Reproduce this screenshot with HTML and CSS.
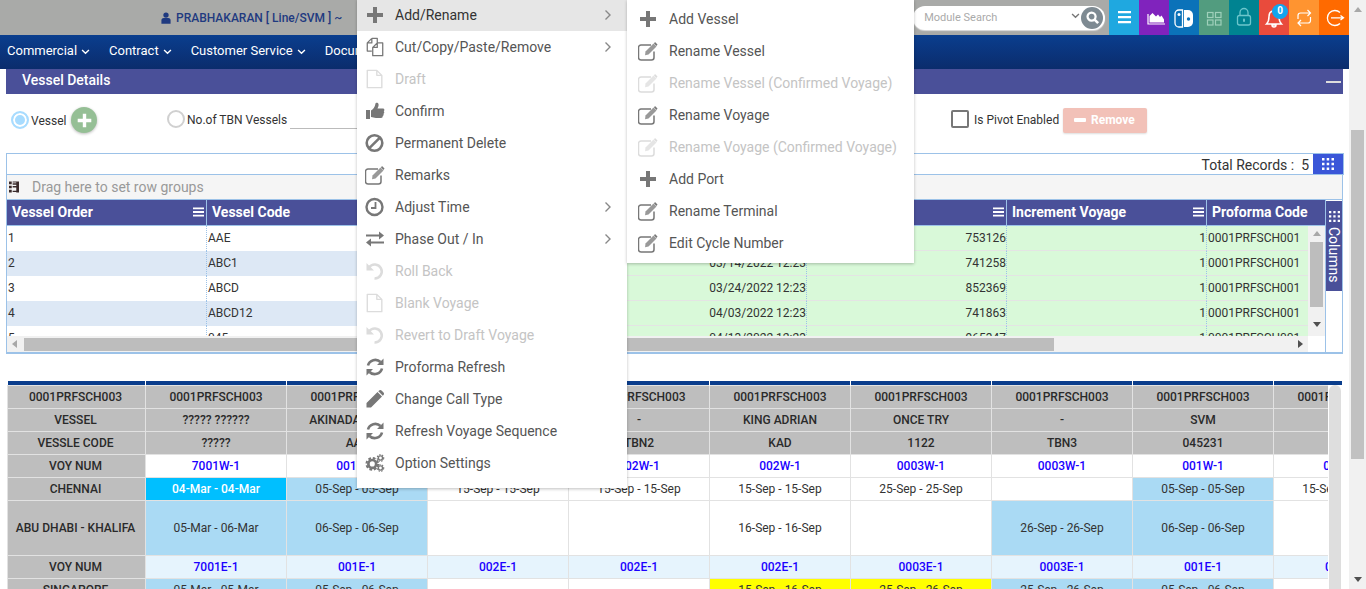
FILE: index.html
```html
<!DOCTYPE html>
<html lang="en">
<head>
<meta charset="utf-8">
<title>Vessel Details</title>
<link rel="stylesheet" href="styles.css">
</head>
<body>
<svg class="sprite" width="0" height="0" aria-hidden="true">
  <defs>
    <symbol id="i-plus" viewBox="0 0 20 20"><path d="M8 2h4v6h6v4h-6v6H8v-6H2V8h6z" fill="currentColor"/></symbol>
    <symbol id="i-copy" viewBox="0 0 20 22"><path d="M6.500 1.500h6v5M6.500 1.500l-5 5v9h5M6.500 1.500v5h-5M12.500 6.500l-5 5v9h11v-14zM12.500 6.500v5h-5" fill="none" stroke="currentColor" stroke-width="1.400" stroke-linejoin="round"/></symbol>
    <symbol id="i-file" viewBox="0 0 20 22"><path d="M1.500 1.500h10.500l5.500 5.500v13.500h-16zM12 1.500V7h5.500" fill="none" stroke="currentColor" stroke-width="1.500" stroke-linejoin="round"/></symbol>
    <symbol id="i-thumb" viewBox="0 0 20 20"><path d="M1 9h4v9H1zM6 9.500c2-1 4-3.500 4.500-7 0-1 2.500-1.500 3 .5.400 1.500-.5 3.500-1 4.500H18c1.500 0 1.800 2 .8 2.700.8.800.6 2-.3 2.500.4 1-.1 2-.8 2.300.2 1.200-.5 2-1.700 2H11c-2 0-3-1-5-1z" fill="currentColor"/></symbol>
    <symbol id="i-ban" viewBox="0 0 20 20"><circle cx="9.500" cy="10" r="7.800" fill="none" stroke="currentColor" stroke-width="2.600"/><path d="M4.300 15.200 14.700 4.800" stroke="currentColor" stroke-width="2.600"/></symbol>
    <symbol id="i-edit" viewBox="0 0 20 20"><path d="M16 10.500v6a2.500 2.500 0 0 1-2.500 2.500H3a2.500 2.500 0 0 1-2.500-2.500V6.500A2.500 2.500 0 0 1 3 4h10" fill="none" stroke="currentColor" stroke-width="1.500"/><path d="M7.500 10.500 15.500 2.500l3 3-8 8-3.500.7z" fill="currentColor" fill-opacity=".75"/><path d="M17 1l2.500 2.500L18.500 5 16 2.500z" fill="currentColor"/></symbol>
    <symbol id="i-clock" viewBox="0 0 20 20"><circle cx="9.500" cy="10" r="8" fill="none" stroke="currentColor" stroke-width="2.400"/><path d="M10.500 5v6H6" fill="none" stroke="currentColor" stroke-width="1.800"/></symbol>
    <symbol id="i-swap" viewBox="0 0 20 20"><path d="M1 5.500h13V2.500l5 4-5 4V7.500H1zM19 12.500H6V9.500l-5 4 5 4v-3h13z" fill="currentColor"/></symbol>
    <symbol id="i-undo" viewBox="0 0 20 20"><path d="M4 6.500A7 7 0 1 1 9.500 17.500" fill="none" stroke="currentColor" stroke-width="2.500"/><path d="M1.500 2v7.500H9z" fill="currentColor"/></symbol>
    <symbol id="i-sync" viewBox="0 0 20 20"><path d="M3 8.500A7.500 7.500 0 0 1 15.500 5M17 11.500A7.500 7.500 0 0 1 4.500 15" fill="none" stroke="currentColor" stroke-width="2.600"/><path d="M18.500 1.500V8H12zM1.500 18.500V12H8z" fill="currentColor"/></symbol>
    <symbol id="i-pencil" viewBox="0 0 20 20"><path d="M1.500 14 12.500 3l4.500 4.500L6 18.500H1.500zM13.800 1.700c1-1 2-1 3 0l1.500 1.500c1 1 1 2 0 3l-.5.500-4.500-4.500z" fill="currentColor"/></symbol>
    <symbol id="i-cogs" viewBox="0 0 22 20"><circle cx="8" cy="11" r="4.300" fill="none" stroke="currentColor" stroke-width="3"/><circle cx="8" cy="11" r="6.400" fill="none" stroke="currentColor" stroke-width="2.200" stroke-dasharray="3 2"/><circle cx="17" cy="4.500" r="2.300" fill="none" stroke="currentColor" stroke-width="1.500"/><circle cx="17" cy="4.500" r="3.600" fill="none" stroke="currentColor" stroke-width="1.200" stroke-dasharray="1.800 1.200"/><circle cx="17" cy="15.500" r="2.300" fill="none" stroke="currentColor" stroke-width="1.500"/><circle cx="17" cy="15.500" r="3.600" fill="none" stroke="currentColor" stroke-width="1.200" stroke-dasharray="1.800 1.200"/></symbol>
    <symbol id="i-chev" viewBox="0 0 8 12"><path d="M1.500 1.500 6 6l-4.500 4.500" fill="none" stroke="currentColor" stroke-width="1.400"/></symbol>
    <symbol id="i-down" viewBox="0 0 10 7"><path d="M1 1.200 5 5l4-3.800" fill="none" stroke="currentColor" stroke-width="1.600"/></symbol>
    <symbol id="i-bars" viewBox="0 0 12 10"><path d="M0 0h12v2H0zM0 4h12v2H0zM0 8h12v2H0z" fill="currentColor"/></symbol>
    <symbol id="i-dots" viewBox="0 0 12 12"><path d="M0 0h2.500v2.500H0zM4.700 0h2.500v2.500H4.700zM9.500 0H12v2.500H9.500zM0 4.700h2.500v2.500H0zM4.700 4.700h2.500v2.500H4.700zM9.500 4.700H12v2.500H9.500zM0 9.500h2.500V12H0zM4.700 9.500h2.500V12H4.700zM9.500 9.500H12V12H9.500z" fill="currentColor"/></symbol>
  </defs>
</svg>

<div class="page">
  <header class="topbar">
    <div class="user">
      <svg class="user-ico" viewBox="0 0 12 14"><circle cx="6" cy="3.500" r="3.200" fill="currentColor"/><path d="M.5 14V9.500C.5 8 2 7 3.200 7h5.600C10 7 11.500 8 11.500 9.500V14z" fill="currentColor"/></svg>
      <span>PRABHAKARAN [ Line/SVM ] ~</span>
    </div>
    <div class="search">
      <span class="search-ph">Module Search</span>
      <svg class="search-chev"><use href="#i-down"/></svg>
      <span class="search-btn"><svg viewBox="0 0 16 16"><circle cx="7" cy="7" r="4.300" fill="none" stroke="#fff" stroke-width="2.400"/><path d="M10.200 10.200 14 14" stroke="#fff" stroke-width="2.800"/></svg></span>
    </div>
    <div class="tiles">
      <span class="tile t1"><svg viewBox="0 0 30 35"><path d="M9 11h13v2.200H9zM9 16h13v2.200H9zM9 21h13v2.200H9z" fill="#fff"/></svg></span>
      <span class="tile t2"><svg viewBox="0 0 30 35"><path d="M9 14v10h17" fill="none" stroke="#fff" stroke-width="1.200"/><path d="M10.500 22.500V16l3-3 3.500 3.500 2-2 2 2.500 1.500-1.500 2.500 4v3z" fill="#fff"/></svg></span>
      <span class="tile t3"><svg viewBox="0 0 30 35"><path d="M13.500 10H10a4 4 0 0 0-4 4v9a4 4 0 0 0 4 4h3.500z" fill="none" stroke="#fff" stroke-width="1.300"/><path d="M15 10h4a5 5 0 0 1 5 5v7a5 5 0 0 1-5 5h-4z" fill="#fff"/><circle cx="10" cy="14.500" r="1.500" fill="#fff"/><circle cx="19.500" cy="19" r="1.700" fill="#0b72b9"/></svg></span>
      <span class="tile t4"><svg viewBox="0 0 30 35"><g fill="none" stroke="#9fd0ba" stroke-width="1.200"><rect x="8.500" y="12.500" width="5.500" height="5"/><rect x="16.500" y="12.500" width="5.500" height="5"/><rect x="8.500" y="20" width="5.500" height="5"/><rect x="16.500" y="20" width="5.500" height="5"/></g></svg></span>
      <span class="tile t5"><svg viewBox="0 0 30 35"><g fill="none" stroke="#6cc6cc" stroke-width="1.300"><rect x="8.500" y="15.500" width="13" height="9.500" rx="2"/><path d="M11 15.500V12.500a4 4 0 0 1 8 0v3"/></g><rect x="14" y="18.500" width="2" height="3.500" rx="1" fill="#6cc6cc"/></svg></span>
      <span class="tile t6"><svg viewBox="0 0 30 35"><path d="M15 11c-3.500 0-5 2.500-5 5.500 0 4-1 6-2.500 7.500h15C21 22.500 20 20.500 20 16.500c0-3-1.500-5.500-5-5.500zM13 25h4a2 2 0 0 1-4 0z" fill="none" stroke="#fff" stroke-width="1.500"/></svg><b class="badge">0</b></span>
      <span class="tile t7"><svg viewBox="0 0 30 35"><path d="M9 19v-3.500a2.500 2.500 0 0 1 2.500-2.500H21M18.500 10l3 3-3 3M21.500 17v3.500a2.500 2.500 0 0 1-2.500 2.500H9M12 20l-3 3 3 3" fill="none" stroke="#fff" stroke-width="1.200"/></svg></span>
      <span class="tile t8"><svg viewBox="0 0 30 35"><path d="M21 12.500a7.500 7.500 0 1 0 0 11" fill="none" stroke="#fff" stroke-width="1.300"/><path d="M12 17.800h12M21.500 15.500l3 2.300-3 2.300" fill="none" stroke="#fff" stroke-width="1.300"/></svg></span>
    </div>
  </header>

  <nav class="mainnav">
    <a>Commercial<svg><use href="#i-down"/></svg></a>
    <a>Contract<svg><use href="#i-down"/></svg></a>
    <a>Customer Service<svg><use href="#i-down"/></svg></a>
    <a>Documentation<svg><use href="#i-down"/></svg></a>
  </nav>

  <main class="content">
    <section class="panel-head">
      <h1>Vessel Details</h1>
      <span class="minus"></span>
    </section>

    <section class="filters">
      <span class="radio on"></span>
      <label class="f-vessel">Vessel</label>
      <span class="round-add"><svg><use href="#i-plus"/></svg></span>
      <span class="radio second"></span>
      <label class="f-tbn">No.of TBN Vessels</label>
      <span class="line-input"></span>
      <span class="check"></span>
      <label class="f-pivot">Is Pivot Enabled</label>
      <span class="remove-btn"><i></i>Remove</span>
    </section>

    <section class="grid-top">
      <span class="total">Total Records :&nbsp; 5</span>
      <span class="grid-btn"><svg><use href="#i-dots"/></svg></span>
    </section>

    <section class="grid">
      <div class="group-bar">
        <svg class="group-ico" viewBox="0 0 11 12"><path d="M0 0h3v3H0zM0 4.500h3v3H0zM0 9h3v3H0zM4 2h7v1.500H4zM4 0h7v1H4zM4 5h7v1.500H4zM4 10h7v1.500H4zM8 0h3v12H8z" fill="#3a2a2a"/></svg>
        <span>Drag here to set row groups</span>
      </div>
      <div class="grid-main">
        <div class="grid-left">
          <div class="g-head">
            <div class="hc">Vessel Order<svg><use href="#i-bars"/></svg></div>
            <div class="hc">Vessel Code<svg><use href="#i-bars"/></svg></div>
            <div class="hc">Vessel Name<svg><use href="#i-bars"/></svg></div>
            <div class="hc">Start Date<svg><use href="#i-bars"/></svg></div>
            <div class="hc">Start Voyage<svg><use href="#i-bars"/></svg></div>
            <div class="hc">Increment Voyage<svg><use href="#i-bars"/></svg></div>
            <div class="hc last">Proforma Code</div>
          </div>
          <div class="g-mid">
            <div class="g-body">
              <div class="g-row">
                <div class="c">1</div><div class="c">AAE</div><div class="c g"></div><div class="c g r">03/04/2022 12:23</div><div class="c g r">753126</div><div class="c g r">1</div><div class="c g last">0001PRFSCH001</div>
              </div>
              <div class="g-row alt">
                <div class="c">2</div><div class="c">ABC1</div><div class="c g"></div><div class="c g r">03/14/2022 12:23</div><div class="c g r">741258</div><div class="c g r">1</div><div class="c g last">0001PRFSCH001</div>
              </div>
              <div class="g-row">
                <div class="c">3</div><div class="c">ABCD</div><div class="c g"></div><div class="c g r">03/24/2022 12:23</div><div class="c g r">852369</div><div class="c g r">1</div><div class="c g last">0001PRFSCH001</div>
              </div>
              <div class="g-row alt">
                <div class="c">4</div><div class="c">ABCD12</div><div class="c g"></div><div class="c g r">04/03/2022 12:23</div><div class="c g r">741863</div><div class="c g r">1</div><div class="c g last">0001PRFSCH001</div>
              </div>
              <div class="g-row">
                <div class="c">5</div><div class="c">045</div><div class="c g"></div><div class="c g r">04/13/2022 12:23</div><div class="c g r">965347</div><div class="c g r">1</div><div class="c g last">0001PRFSCH001</div>
              </div>
            </div>
            <div class="v-scroll"><i class="arr up"></i><b></b><i class="arr down"></i></div>
          </div>
          <div class="h-scroll">
            <div class="h-track"><i class="arr left"></i><b></b><i class="arr right"></i></div>
          </div>
        </div>
        <aside class="side">
          <div class="side-tab"><svg><use href="#i-dots"/></svg><span>Columns</span></div>
        </aside>
      </div>
    </section>

    <section class="sched">
      <table>
        <colgroup><col class="c0"><col class="cn"><col class="cn"><col class="cn"><col class="cn"><col class="cn"><col class="cn"><col class="cn"><col class="cn"><col class="cn"></colgroup>
        <tr class="stripe"><td></td><td></td><td></td><td></td><td></td><td></td><td></td><td></td><td></td><td></td></tr>
        <tr class="hd"><td>0001PRFSCH003</td><td>0001PRFSCH003</td><td>0001PRFSCH003</td><td>0001PRFSCH003</td><td>0001PRFSCH003</td><td>0001PRFSCH003</td><td>0001PRFSCH003</td><td>0001PRFSCH003</td><td>0001PRFSCH003</td><td>0001PRFSCH003</td></tr>
        <tr class="hd"><td>VESSEL</td><td>????? ??????</td><td>AKINADA BRIDGE</td><td>-</td><td>-</td><td>KING ADRIAN</td><td>ONCE TRY</td><td>-</td><td>SVM</td><td>TEST</td></tr>
        <tr class="hd"><td>VESSLE CODE</td><td>?????</td><td>AAE</td><td>TBN1</td><td>TBN2</td><td>KAD</td><td>1122</td><td>TBN3</td><td>045231</td><td>TES</td></tr>
        <tr class="voy"><td class="lab">VOY NUM</td><td>7001W-1</td><td>001W-1</td><td>002W-1</td><td>002W-1</td><td>002W-1</td><td>0003W-1</td><td>0003W-1</td><td>001W-1</td><td>001W-1</td></tr>
        <tr><td class="lab">CHENNAI</td><td class="now">04-Mar - 04-Mar</td><td class="blu">05-Sep - 05-Sep</td><td>15-Sep - 15-Sep</td><td>15-Sep - 15-Sep</td><td>15-Sep - 15-Sep</td><td>25-Sep - 25-Sep</td><td></td><td class="blu">05-Sep - 05-Sep</td><td>15-Sep - 15-Sep</td></tr>
        <tr class="tall"><td class="lab">ABU DHABI - KHALIFA</td><td class="blu">05-Mar - 06-Mar</td><td class="blu">06-Sep - 06-Sep</td><td></td><td></td><td>16-Sep - 16-Sep</td><td></td><td class="blu">26-Sep - 26-Sep</td><td class="blu">06-Sep - 06-Sep</td><td></td></tr>
        <tr class="voy east"><td class="lab">VOY NUM</td><td>7001E-1</td><td>001E-1</td><td>002E-1</td><td>002E-1</td><td>002E-1</td><td>0003E-1</td><td>0003E-1</td><td>001E-1</td><td>001E-1</td></tr>
        <tr><td class="lab">SINGAPORE</td><td class="blu">05-Mar - 05-Mar</td><td class="blu">05-Sep - 06-Sep</td><td></td><td></td><td class="yel">15-Sep - 16-Sep</td><td class="yel">25-Sep - 26-Sep</td><td class="blu">25-Sep - 26-Sep</td><td class="blu">05-Sep - 06-Sep</td><td></td></tr>
      </table>
      <div class="sched-scroll"><b></b></div>
    </section>
  </main>
</div>

<div class="page-scroll"><i class="arr up"></i><b></b><i class="arr down"></i></div>

<div class="menu">
  <div class="mi active"><svg><use href="#i-plus"/></svg><span>Add/Rename</span><svg class="chev"><use href="#i-chev"/></svg></div>
  <div class="mi"><svg><use href="#i-copy"/></svg><span>Cut/Copy/Paste/Remove</span><svg class="chev"><use href="#i-chev"/></svg></div>
  <div class="mi off"><svg><use href="#i-file"/></svg><span>Draft</span></div>
  <div class="mi"><svg><use href="#i-thumb"/></svg><span>Confirm</span></div>
  <div class="mi"><svg><use href="#i-ban"/></svg><span>Permanent Delete</span></div>
  <div class="mi"><svg><use href="#i-edit"/></svg><span>Remarks</span></div>
  <div class="mi"><svg><use href="#i-clock"/></svg><span>Adjust Time</span><svg class="chev"><use href="#i-chev"/></svg></div>
  <div class="mi"><svg><use href="#i-swap"/></svg><span>Phase Out / In</span><svg class="chev"><use href="#i-chev"/></svg></div>
  <div class="mi off"><svg><use href="#i-undo"/></svg><span>Roll Back</span></div>
  <div class="mi off"><svg><use href="#i-file"/></svg><span>Blank Voyage</span></div>
  <div class="mi off"><svg><use href="#i-undo"/></svg><span>Revert to Draft Voyage</span></div>
  <div class="mi"><svg><use href="#i-sync"/></svg><span>Proforma Refresh</span></div>
  <div class="mi"><svg><use href="#i-pencil"/></svg><span>Change Call Type</span></div>
  <div class="mi"><svg><use href="#i-sync"/></svg><span>Refresh Voyage Sequence</span></div>
  <div class="mi"><svg><use href="#i-cogs"/></svg><span>Option Settings</span></div>

  <div class="submenu">
    <div class="mi"><svg><use href="#i-plus"/></svg><span>Add Vessel</span></div>
    <div class="mi"><svg><use href="#i-edit"/></svg><span>Rename Vessel</span></div>
    <div class="mi off"><svg><use href="#i-edit"/></svg><span>Rename Vessel (Confirmed Voyage)</span></div>
    <div class="mi"><svg><use href="#i-edit"/></svg><span>Rename Voyage</span></div>
    <div class="mi off"><svg><use href="#i-edit"/></svg><span>Rename Voyage (Confirmed Voyage)</span></div>
    <div class="mi"><svg><use href="#i-plus"/></svg><span>Add Port</span></div>
    <div class="mi"><svg><use href="#i-edit"/></svg><span>Rename Terminal</span></div>
    <div class="mi"><svg><use href="#i-edit"/></svg><span>Edit Cycle Number</span></div>
  </div>
</div>
</body>
</html>
```

FILE: styles.css
```css
* { box-sizing: border-box; }
html, body { margin: 0; padding: 0; height: 589px; overflow: hidden; }
body {
  display: flex;
  width: 1366px;
  background: #fff;
  font-family: Roboto, "Liberation Sans", sans-serif;
  font-size: 12px;
  color: #333;
}
.sprite { position: absolute; }
.page { width: 1349px; flex: none; }

/* top bar */
.topbar { height: 35px; background: #a9aaa8; display: flex; align-items: center; }
.user { width: 914px; padding-left: 161px; display: flex; align-items: center; gap: 5px; color: #1f3a80; font-weight: 500; font-size: 12px; }
.user-ico { width: 10px; height: 12px; }
.search { width: 192px; height: 24px; background: #fff; border-radius: 12px; display: flex; align-items: center; padding-left: 11px; box-shadow: 0 1px 1px #ddd; }
.search-ph { width: 147px; color: #aaa; font-size: 11px; }
.search-chev { width: 9px; height: 6px; color: #777; margin-bottom: 4px; }
.search-btn { width: 22px; height: 22px; margin-left: 1px; border-radius: 50%; background: #7e8a92; display: flex; align-items: center; justify-content: center; }
.search-btn svg { width: 15px; height: 15px; }
.tiles { margin-left: 4px; display: flex; }
.tile { width: 30px; height: 35px; display: block; position: relative; }
.tile svg { width: 30px; height: 35px; display: block; }
.t1 { background: #1fa8e0; }
.t2 { background: #8023bd; }
.t3 { background: #0b72b9; }
.t4 { background: #529c7f; }
.t5 { background: #008391; }
.t6 { background: #e94b3c; }
.t7 { background: #ff9430; }
.t8 { background: #ff6a00; }
.badge { position: absolute; left: 13px; top: 4px; width: 16px; height: 15px; border-radius: 50%; background: #12a5ee; color: #fff; font-size: 10px; font-weight: 700; text-align: center; line-height: 14px; }

/* nav */
.mainnav { height: 34px; background: linear-gradient(#0a3e8e, #0b2c6c); display: flex; padding: 0 0 3px 7px; gap: 15px; align-items: center; }
.mainnav a { color: #fff; font-size: 13px; display: flex; align-items: center; gap: 4px; }
.mainnav svg { width: 9px; height: 6px; margin-top: 2px; color: #fff; margin-right: 4px; }

/* content */
.content { padding: 0 6px; }
.panel-head { height: 25px; background: #4a5099; display: flex; align-items: center; justify-content: space-between; padding: 0 2px 0 16px; }
.panel-head h1 { margin: 0 0 3px; font-size: 14px; font-weight: 500; color: #fff; }
.minus { width: 15px; height: 2px; background: #ddd; }

.filters { height: 59px; display: flex; align-items: center; padding: 0 196px 7px 5px; }
.filters label { padding-top: 2px; }
.radio { width: 18px; height: 18px; border-radius: 50%; border: 2px solid #d0d0d0; background: #fff; flex: none; }
.radio.on { border-color: #a8dcff; box-shadow: inset 0 0 0 2px #fff; background: #a8dcff; }
.radio.second { margin-left: 70px; margin-bottom: 2px; }
.f-vessel { margin-left: 2px; width: 40px; }
.round-add { width: 26px; height: 26px; border-radius: 50%; background: #95bf95; box-shadow: 0 1px 3px #bbb; display: flex; align-items: center; justify-content: center; color: #fff; }
.round-add svg { width: 17px; height: 17px; }
.f-tbn { margin-left: 2px; margin-bottom: 2px; width: 103px; }
.line-input { width: 90px; height: 18px; border-bottom: 1px solid #bbb; }
.check { margin-left: auto; width: 18px; height: 18px; border: 2px solid #777; border-radius: 2px; margin-bottom: 2px; }
.f-pivot { margin-left: 5px; margin-bottom: 2px; width: 89px; }
.remove-btn { width: 84px; height: 25px; border-radius: 2px; background: #f2c1b8; color: #fff; font-weight: 700; display: flex; align-items: center; padding-left: 11px; gap: 5px; box-shadow: 0 1px 2px #ddd; }
.remove-btn i { width: 12px; height: 4px; border-radius: 1px; background: #fff; }

.grid-top { width: 1338px; height: 22px; border: 1px solid #9cc2e8; display: flex; justify-content: flex-end; align-items: center; }
.total { font-size: 14px; color: #333; margin: 2px 4px 0 0; }
.grid-btn { width: 30px; height: 20px; background: #3a56d8; color: #fff; display: flex; align-items: center; justify-content: center; }
.grid-btn svg { width: 12px; height: 12px; }

.grid { width: 1337px; border: 1px solid #9cc2e8; border-top: 0; border-bottom-width: 2px; }
.group-bar { height: 25px; background: #f5f5f5; border-bottom: 1px solid #9cc2e8; display: flex; align-items: center; padding-left: 2px; color: #999; font-size: 14px; gap: 13px; }
.group-ico { width: 10px; height: 12px; }
.grid-main { display: flex; }
.grid-left { width: 1318px; }
.g-head { height: 26px; background: #4a5099; border-bottom: 1px solid #9cc2e8; display: flex; }
.hc { width: 200px; flex: none; display: flex; align-items: center; justify-content: space-between; padding: 0 2px 2px 5px; color: #fff; font-size: 14px; font-weight: 700; border-right: 1px solid #9cc2e8; }
.hc svg { width: 11px; height: 10px; }
.hc.last { width: 118px; border-right: 0; }
.g-mid { height: 110px; display: flex; }
.g-body { width: 1301px; overflow: hidden; }
.g-row { height: 25px; display: flex; background: #fff; }
.g-row.alt { background: #dde8f5; }
.c { width: 200px; flex: none; height: 25px; line-height: 24px; padding: 0 1px; border-right: 1px dotted #9cc2e8; overflow: hidden; white-space: nowrap; }
.c.g { background: #d9f9d9; border-bottom: 1px solid #e4e4e4; }
.c.r { text-align: right; padding-right: 0; }
.c.last { width: 101px; border-right: 0; }
.v-scroll { width: 17px; background: #f1f1f1; display: flex; flex-direction: column; align-items: center; padding-top: 5px; }
.v-scroll b { display: block; width: 13px; height: 65px; background: #bdbdbd; margin: 6px 0 15px; }
.arr { display: block; width: 0; height: 0; border: 4px solid transparent; flex: none; }
.arr.up { border-top: 0; border-bottom: 5px solid #a8a8a8; }
.arr.down { border-bottom: 0; border-top: 5px solid #505050; }
.arr.left { border-left: 0; border-right: 5px solid #a8a8a8; }
.arr.right { border-right: 0; border-left: 5px solid #505050; }
.h-scroll { height: 16px; }
.h-track { width: 1301px; height: 16px; background: #f1f1f1; display: flex; align-items: center; padding-left: 5px; }
.h-track b { display: block; width: 1030px; height: 13px; background: #bdbdbd; margin-left: 7px; margin-right: 244px; }
.side { width: 18px; flex: none; border-left: 1px solid #9cc2e8; }
.side-tab { width: 16px; height: 90px; margin-top: 1px; background: #4a5099; color: #fff; display: flex; flex-direction: column; align-items: center; padding-top: 10px; gap: 5px; }
.side-tab svg { width: 11px; height: 11px; }
.side-tab span { writing-mode: vertical-rl; font-size: 14px; }

/* schedule */
.sched { position: relative; width: 1335px; margin: 27px 0 0 1px; overflow: hidden; height: 209px; }
.sched table { border-collapse: collapse; table-layout: fixed; width: 1407px; }
.c0 { width: 138px; }
.cn { width: 141px; }
.sched td { height: 23px; padding: 0 2px; border: 1px solid #e2e2e2; text-align: center; font-size: 12px; white-space: nowrap; overflow: hidden; background: #fff; color: #333; }
.sched td:first-child { padding-right: 4px; }
.sched tr.stripe td { height: 4px; padding: 0; background: #0a3d8c; border: 0; border-right: 1px solid #fff; font-size: 0; line-height: 0; }
.sched tr.hd td, .sched td.lab { background: #bebebe; font-weight: 500; color: #2a2a2a; }
.sched tr.voy td { color: #1a00ff; font-weight: 500; }
.sched tr.voy td.lab { color: #2a2a2a; }
.sched tr.east td { background: #e6f4fd; }
.sched tr.east td.lab { background: #bebebe; }
.sched tr.tall td { height: 55px; }
.sched td.blu { background: #aadaf4; }
.sched td.now { background: #00bfff; color: #fff; font-weight: 500; }
.sched td.yel { background: #ffff00; }
.sched-scroll { position: absolute; right: 0; top: 4px; bottom: 0; width: 14px; background: #fff; padding: 0 1px; }
.sched-scroll b { display: block; height: 100%; background: #dedede; border-radius: 6px 6px 0 0; }

/* page scrollbar */
.page-scroll { width: 17px; flex: none; background: #f1f1f1; display: flex; flex-direction: column; align-items: center; padding-top: 7px; }
.page-scroll b { display: block; width: 13px; height: 329px; background: #c1c1c1; margin: 118px 0 118px; }

/* context menus */
.menu { position: absolute; left: 357px; top: -1px; width: 270px; padding-bottom: 9px; background: #fff; box-shadow: 0 1px 3px rgba(0,0,0,.25); }
.submenu { position: absolute; left: 270px; top: 1px; width: 287px; padding: 3px 0 4px; background: #fff; box-shadow: 0 1px 3px rgba(0,0,0,.25); }
.mi { height: 32px; display: flex; align-items: center; padding-left: 8px; font-size: 14px; color: #555; }
.mi > svg { width: 20px; height: 20px; color: #777; flex: none; margin-right: 10px; }
.mi > span { flex: 1; }
.mi > svg.chev { width: 8px; height: 12px; margin: 0 15px 0 0; color: #888; }
.mi.active { background: #e6e6e6; color: #333; }
.mi.off { color: #c4c4c4; }
.mi.off > svg { color: #dcdcdc; }
.submenu .mi { padding-left: 11px; }
.submenu .mi > svg { margin-right: 11px; }
```
